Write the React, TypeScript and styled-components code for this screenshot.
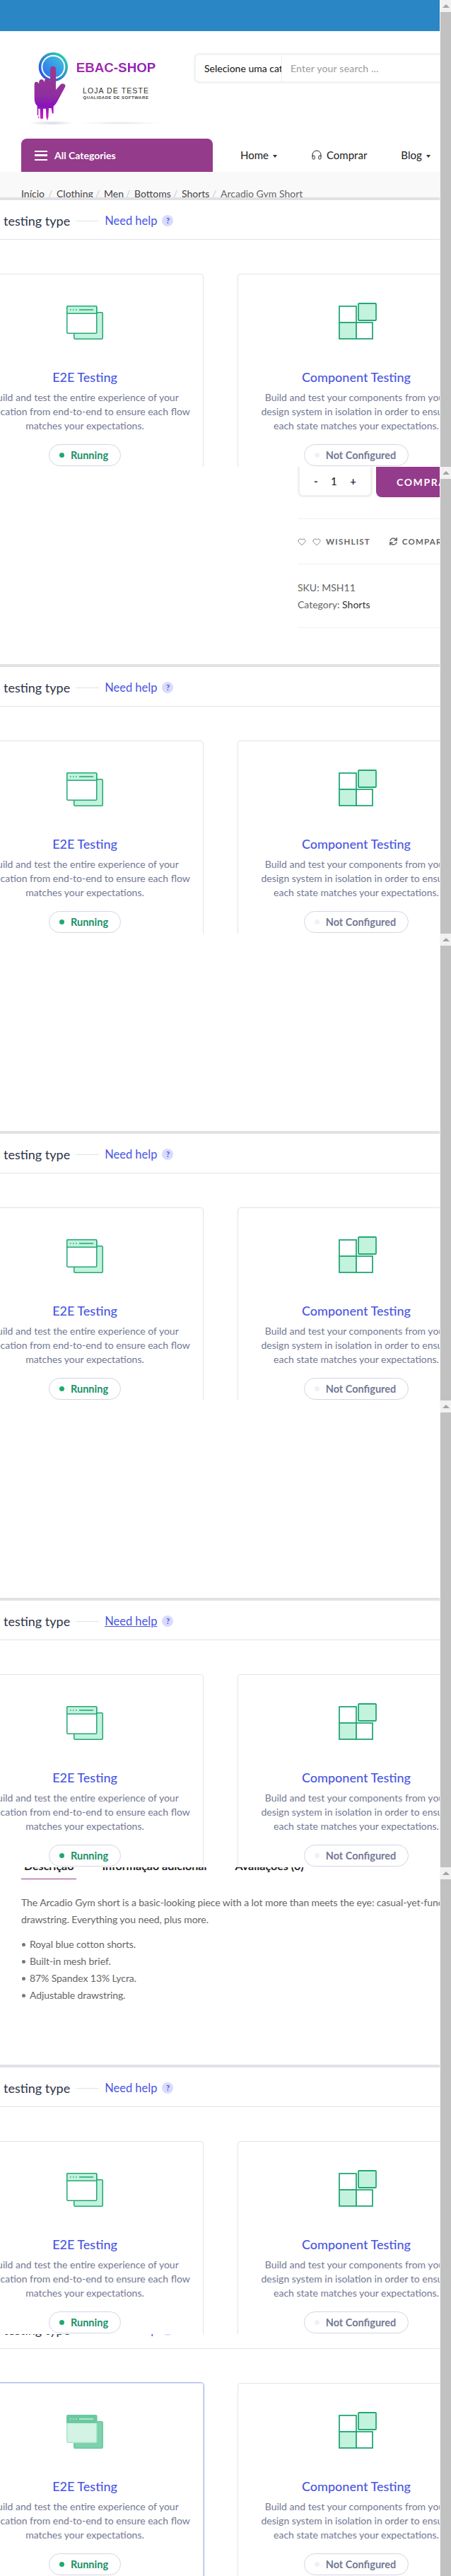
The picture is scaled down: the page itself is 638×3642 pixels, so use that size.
import React from "react";
import styled, { createGlobalStyle } from "styled-components";
import { Headphones, Heart } from "lucide-react";
import { FaShoppingCart, FaSync } from "react-icons/fa";

const purple = "#953b8b";
const panelFont = `"Lato", "Open Sans", sans-serif`;

const GlobalStyle = createGlobalStyle`
  html, body {
    margin: 0;
    padding: 0;
    background: #fff;
    font-family: "Lato", sans-serif;
    overflow: hidden;
  }
  * { box-sizing: border-box; }
`;

const Page = styled.div`
  display: flex;
  width: 638px;
  height: 3642px;
  overflow: hidden;
`;

const Content = styled.main`
  width: 622px;
  flex: none;
  overflow: hidden;
`;

/* scroll rail: the capture was stitched, so each screenful has its own up arrow */
const Rail = styled.aside`
  width: 16px;
  flex: none;
  display: flex;
  flex-direction: column;
  border-left: 1px solid #f7f7f7;
`;

const RailArrow = styled.div`
  height: 17px;
  flex: none;
  background: #f1f1f1;
  display: flex;
  align-items: center;
  justify-content: center;
  &::before {
    content: "";
    border-left: 5px solid transparent;
    border-right: 5px solid transparent;
    border-bottom: 5px solid #a3a3a3;
  }
`;

const RailThumb = styled.div<{ $h: number }>`
  height: ${(p) => p.$h}px;
  flex: none;
  background: #c1c1c1;
`;

const TopBar = styled.div`
  height: 44px;
  background: #2b86c5;
`;

const HeaderRow = styled.header`
  height: 152px;
  display: flex;
  align-items: flex-start;
`;

const Logo = styled.div`
  width: 274px;
  flex: none;
  padding: 29px 0 0 40px;
`;

const LogoTop = styled.div`
  display: flex;
  padding-left: 7px;
`;

const LogoText = styled.div`
  margin-left: 11px;
  width: 114px;
  padding-top: 10px;
  text-align: center;
  white-space: nowrap;
`;

const LogoName = styled.div`
  font: bold 18.8px/26px "Liberation Sans", sans-serif;
  background: linear-gradient(90deg, #a52cab, #8d24b5);
  -webkit-background-clip: text;
  background-clip: text;
  color: transparent;
`;

const LogoTag = styled.div`
  margin-top: 13px;
  font: 10.5px/12px "Liberation Sans", sans-serif;
  letter-spacing: 1.1px;
  color: #333;
`;

const LogoSub = styled.div`
  font: bold 6px/8px "Liberation Sans", sans-serif;
  letter-spacing: 0.55px;
  color: #444;
`;

const LogoShadow = styled.div`
  margin-top: 1px;
  height: 6px;
  width: 190px;
  background:
    radial-gradient(ellipse 33px 3px at 33px 3px, #d9d7e2, transparent),
    radial-gradient(ellipse 60px 2px at 130px 3px, #e4e2ec, transparent);
`;

const SearchBox = styled.div`
  margin-top: 31px;
  flex: 1;
  height: 43px;
  display: flex;
  align-items: center;
  border: 3px solid #f3f3f3;
  border-right: 0;
  border-radius: 8px 0 0 8px;
`;

const CategorySelect = styled.div`
  width: 122px;
  flex: none;
  padding: 0 7px 0 12px;
  height: 100%;
  line-height: 37px;
  font-size: 14px;
  color: #111;
  white-space: nowrap;
  overflow: hidden;
  border-right: 1px solid #f0f0f0;
`;

const SearchPlaceholder = styled.div`
  padding-left: 12px;
  font-size: 14px;
  color: #9a9a9a;
  letter-spacing: 0.2px;
`;

const NavRow = styled.nav`
  height: 47px;
  display: flex;
  padding-left: 30px;
`;

const CategoryBar = styled.div`
  width: 271px;
  flex: none;
  background: ${purple};
  border-radius: 8px 8px 0 0;
  display: flex;
  align-items: center;
  padding-left: 19px;
  gap: 10px;
  color: #fff;
  font-size: 14px;
  font-weight: 700;
`;

const Burger = styled.span`
  width: 18px;
  height: 14px;
  flex: none;
  border-top: 2.5px solid #fff;
  border-bottom: 2.5px solid #fff;
  position: relative;
  &::after {
    content: "";
    position: absolute;
    left: 0;
    right: 0;
    top: 3.5px;
    height: 2.5px;
    background: #fff;
  }
`;

const NavItems = styled.div`
  display: flex;
  align-items: center;
  padding: 0 0 1px 39px;
  gap: 48px;
  font-size: 15px;
  color: #222;
  white-space: nowrap;
`;

const NavItem = styled.span`
  display: flex;
  align-items: center;
  gap: 6px;
  color: #222;
`;

const Caret = styled.i`
  width: 0;
  height: 0;
  margin-top: 3px;
  border-left: 3.5px solid transparent;
  border-right: 3.5px solid transparent;
  border-top: 4px solid #333;
`;

const BreadcrumbBand = styled.div`
  height: 36px;
  background: #f9f9f9;
  overflow: hidden;
  padding: 22px 0 0 30px;
  display: flex;
  gap: 5px;
  font-size: 14px;
  line-height: 18px;
  color: #444;
  white-space: nowrap;
`;

const Crumb = styled.span<{ $current?: boolean; $w: number }>`
  width: ${(p) => p.$w}px;
  color: ${(p) => (p.$current ? "#666" : "#444")};
`;

const CrumbSep = styled.span`
  color: #ccc;
  width: 7px;
`;

const Panel = styled.section<{ $bare?: boolean }>`
  height: ${(p) => (p.$bare ? 342 : 381)}px;
  overflow: hidden;
  border-top: ${(p) => (p.$bare ? "0" : "4px solid #e1e1e6")};
  background: #fff;
  font-family: ${panelFont};
`;

const PanelInner = styled.div<{ $lift?: boolean }>`
  margin-top: ${(p) => (p.$lift ? -35 : 0)}px;
`;

const PanelHead = styled.div`
  height: 56px;
  border-bottom: 1px solid #e1e3ed;
  display: flex;
  align-items: center;
  padding: 3px 0 0 5px;
  white-space: nowrap;
`;

const PanelTitle = styled.span`
  font-size: 18px;
  color: #2e3247;
`;

const HeadRule = styled.span`
  width: 33px;
  height: 1px;
  margin: 0 8px;
  background: #e1e3ed;
`;

const HelpLink = styled.span<{ $underline?: boolean }>`
  font-size: 16.5px;
  color: #4956e3;
  text-decoration: ${(p) => (p.$underline ? "underline" : "none")};
`;

const HelpBadge = styled.span`
  width: 16px;
  height: 16px;
  margin-left: 7px;
  border-radius: 50%;
  background: #d9dbfb;
  color: #4956e3;
  font-size: 11px;
  font-weight: 700;
  line-height: 16px;
  text-align: center;
`;

const CardGrid = styled.div`
  margin: 48px 0 0 -48px;
  display: grid;
  grid-template-columns: 336px 336px;
  gap: 48px;
`;

const Card = styled.article<{ $active?: boolean }>`
  height: 320px;
  padding: 40px 24px 0;
  display: flex;
  flex-direction: column;
  align-items: center;
  text-align: center;
  border: 1px solid #e1e3ed;
  border-radius: 4px;
  box-shadow: ${(p) => (p.$active ? "0 0 0 1px #a9aff5" : "none")};
`;

const IconSlot = styled.div`
  height: 52px;
  display: flex;
  align-items: flex-end;
`;

const ComponentSvg = styled.svg`
  margin-left: 4px;
`;

const CardTitle = styled.h3`
  margin: 39px 0 0;
  font-size: 18px;
  font-weight: 500;
  line-height: 28px;
  color: #4956e3;
  white-space: nowrap;
`;

const CardText = styled.p`
  margin: 5px -10px 0;
  font-size: 14px;
  line-height: 20px;
  color: #747994;
  white-space: nowrap;
`;

const Status = styled.div<{ $on?: boolean }>`
  margin-top: 16px;
  height: 31px;
  padding: 0 17px 0 14px;
  display: flex;
  align-items: center;
  gap: 9px;
  border: 1px solid #d5d4e6;
  border-radius: 16px;
  font-size: 14.5px;
  font-weight: 700;
  color: ${(p) => (p.$on ? "#1a9067" : "#747994")};
  white-space: nowrap;
`;

const StatusDot = styled.i<{ $on?: boolean }>`
  width: 7px;
  height: 7px;
  border-radius: 50%;
  background: ${(p) => (p.$on ? "#1fa971" : "#eff0f8")};
`;

const Gap = styled.div`
  height: 279px;
  overflow: hidden;
`;

const Buy = styled.div`
  padding-left: 421px;
`;

const BuyRow = styled.div`
  height: 43px;
  display: flex;
  gap: 5px;
`;

const Qty = styled.div`
  width: 106px;
  flex: none;
  display: flex;
  align-items: center;
  justify-content: space-between;
  padding: 0 20px;
  border: 3px solid #f0f0f0;
  border-top: 0;
  border-radius: 0 0 8px 8px;
  font-size: 15px;
  font-weight: 700;
  color: #2e3247;
`;

const QtyValue = styled.span`
  font-weight: 400;
  color: #111;
`;

const BuyButton = styled.div`
  flex: 1;
  display: flex;
  align-items: center;
  gap: 9px;
  padding-left: 20px;
  background: ${purple};
  border-radius: 0 0 0 8px;
  color: #fff;
  font-size: 14px;
  font-weight: 700;
  letter-spacing: 1.6px;
  white-space: nowrap;
  overflow: hidden;
`;

const Rule = styled.hr<{ $top: number }>`
  margin: ${(p) => p.$top}px 0 0;
  border: 0;
  border-top: 1px solid #f0f0f0;
`;

const ActionRow = styled.div`
  height: 63px;
  display: flex;
  align-items: center;
  color: #666;
  font-size: 11.5px;
  font-weight: 700;
  letter-spacing: 1.2px;
  white-space: nowrap;
`;

const Action = styled.span`
  display: flex;
  align-items: center;
  gap: 7px;
  margin-right: 27px;
`;

const WishHeart = styled.span`
  display: flex;
  margin-right: 9px;
`;

const MetaList = styled.div`
  padding-top: 21px;
  font-size: 14px;
  line-height: 24px;
  color: #666;
`;

const MetaValue = styled.span`
  color: #333;
`;

const Tabs = styled.div`
  height: 17px;
  display: flex;
  align-items: flex-end;
  padding-left: 30px;
  gap: 32px;
  overflow: hidden;
`;

const Tab = styled.div<{ $active?: boolean }>`
  flex: none;
  padding: 0 4px 8px;
  font-size: 16px;
  line-height: 20px;
  font-weight: 700;
  color: #222;
  border-bottom: 1px solid ${(p) => (p.$active ? purple : "transparent")};
`;

const TabBody = styled.div`
  padding: 21px 0 0 30px;
  font-size: 14px;
  line-height: 24px;
  letter-spacing: -0.08px;
  color: #666;
  white-space: nowrap;
`;

const Paragraph = styled.p`
  margin: 0 0 11px;
`;

const Bullets = styled.ul`
  margin: 0;
  padding: 0;
  list-style: none;
`;

const Bullet = styled.li`
  display: flex;
  align-items: center;
  &::before {
    content: "";
    width: 5px;
    height: 5px;
    margin: 0 6px 0 1px;
    border-radius: 50%;
    background: #777;
  }
`;

const HandLogo = () => (
  <svg width="49" height="97" viewBox="50 70 147 291" style={{ flex: "none" }}>
    <defs>
      <linearGradient id="ring" x1="0" y1="1" x2="1" y2="0">
        <stop offset="0" stopColor="#2a3cf0" />
        <stop offset="1" stopColor="#2ee0a8" />
      </linearGradient>
      <linearGradient id="core" x1="0" y1="1" x2="1" y2="0">
        <stop offset="0" stopColor="#2f6df0" />
        <stop offset="1" stopColor="#3fc4dc" />
      </linearGradient>
      <linearGradient id="hand" x1="0" y1="0" x2="0" y2="1">
        <stop offset="0" stopColor="#9b3a8c" />
        <stop offset="0.55" stopColor="#8f2fa0" />
        <stop offset="0.75" stopColor="#8a12bb" />
        <stop offset="1" stopColor="#d321c4" />
      </linearGradient>
    </defs>
    <circle cx="135" cy="135" r="62" fill="url(#ring)" />
    <circle cx="135" cy="135" r="51" fill="#fff" />
    <circle cx="135" cy="135" r="45" fill="url(#core)" />
    <path
      fill="url(#hand)"
      d="M55 208 Q55 198 64 198 Q73 198 73 208 L75 198 Q76 188 85 188 Q95 188 95 198 L98 195 Q99 183 109 183 Q120 183 120 195 L122 195 L122 144 Q122 132 134 132 Q146 132 146 144 L146 232 L165 210 Q172 204 181 207 Q190 212 184 222 L150 285 Q140 300 136 300 L136 330 Q134 336 130 330 L127 310 L116 310 L114 350 Q110 358 105 350 L104 312 L92 312 L92 352 Q86 360 80 352 L79 312 L72 312 L72 338 Q70 345 67 338 L67 300 Q56 290 55 270 Z"
    />
    <circle cx="73" cy="348" r="3" fill="#e325c8" />
    <circle cx="110" cy="356" r="3" fill="#e325c8" />
  </svg>
);

const E2EIcon = ({ active }: { active?: boolean }) => {
  const stroke = active ? "#6bc9a0" : "#22a876";
  const frontStroke = active ? "#a8e6cb" : "#22a876";
  const back = active ? "#7dd1ac" : "#c3f2dd";
  const front = active ? "#d3f3e4" : "#fff";
  const bar = active ? "#6bc9a0" : "#c3f2dd";
  const marks = active ? "#c3f2dd" : "#22a876";
  return (
    <svg width="52" height="48" viewBox="0 0 52 48" fill="none">
      <rect x="10.75" y="9.75" width="40.5" height="37.5" rx="1.5" fill={back} stroke={stroke} strokeWidth="1.5" />
      <rect x="0.75" y="0.75" width="42" height="38.5" rx="1.5" fill={front} stroke={frontStroke} strokeWidth="1.5" />
      <path d="M0.75 2.25 a1.5 1.5 0 0 1 1.5-1.5 h39 a1.5 1.5 0 0 1 1.5 1.5 v9 h-42 z" fill={bar} stroke={stroke} strokeWidth="1.5" />
      <path d="M5 6h1.5M9 6h1.5M13 6h1.5M18 6h20" stroke={marks} strokeWidth="1.5" />
    </svg>
  );
};

const ComponentIcon = () => (
  <ComponentSvg width="54" height="52" viewBox="0 0 54 52" fill="none" stroke="#22a876" strokeWidth="1.8">
    <rect x="1" y="5" width="24" height="23" fill="#fff" />
    <rect x="1" y="28" width="24" height="23" fill="#c3f2dd" />
    <rect x="25" y="28" width="23" height="23" fill="#fff" />
    <rect x="28" y="1" width="25" height="24" rx="1" fill="#c3f2dd" />
  </ComponentSvg>
);

const TestingPanel = ({
  bare,
  underline,
  active,
}: {
  bare?: boolean;
  underline?: boolean;
  active?: boolean;
}) => (
  <Panel $bare={bare}>
    <PanelInner $lift={bare}>
      <PanelHead>
        <PanelTitle>testing type</PanelTitle>
        <HeadRule />
        <HelpLink $underline={underline}>Need help</HelpLink>
        <HelpBadge>?</HelpBadge>
      </PanelHead>
      <CardGrid>
        <Card $active={active}>
          <IconSlot>
            <E2EIcon active={active} />
          </IconSlot>
          <CardTitle>E2E Testing</CardTitle>
          <CardText>
            Build and test the entire experience of your
            <br />
            application from end-to-end to ensure each flow
            <br />
            matches your expectations.
          </CardText>
          <Status $on>
            <StatusDot $on />
            Running
          </Status>
        </Card>
        <Card>
          <IconSlot>
            <ComponentIcon />
          </IconSlot>
          <CardTitle>Component Testing</CardTitle>
          <CardText>
            Build and test your components from your
            <br />
            design system in isolation in order to ensure
            <br />
            each state matches your expectations.
          </CardText>
          <Status>
            <StatusDot />
            Not Configured
          </Status>
        </Card>
      </CardGrid>
    </PanelInner>
  </Panel>
);

const crumbs: [string, number][] = [
  ["Início", 33],
  ["Clothing", 50],
  ["Men", 26],
  ["Bottoms", 50],
  ["Shorts", 38],
];

const railHeights = [643, 643, 643, 643, 985];

export default function App() {
  return (
    <Page>
      <GlobalStyle />
      <Content>
        <TopBar />
        <HeaderRow>
          <Logo>
            <LogoTop>
              <HandLogo />
              <LogoText>
                <LogoName>EBAC-SHOP</LogoName>
                <LogoTag>LOJA DE TESTE</LogoTag>
                <LogoSub>QUALIDADE DE SOFTWARE</LogoSub>
              </LogoText>
            </LogoTop>
            <LogoShadow />
          </Logo>
          <SearchBox>
            <CategorySelect>Selecione uma cat</CategorySelect>
            <SearchPlaceholder>Enter your search ...</SearchPlaceholder>
          </SearchBox>
        </HeaderRow>
        <NavRow>
          <CategoryBar>
            <Burger />
            All Categories
          </CategoryBar>
          <NavItems>
            <NavItem>
              Home <Caret />
            </NavItem>
            <NavItem>
              <Headphones size={16} strokeWidth={1.5} />
              Comprar
            </NavItem>
            <NavItem>
              Blog <Caret />
            </NavItem>
          </NavItems>
        </NavRow>
        <BreadcrumbBand>
          {crumbs.map(([label, w]) => (
            <React.Fragment key={label}>
              <Crumb $w={w}>{label}</Crumb>
              <CrumbSep>/</CrumbSep>
            </React.Fragment>
          ))}
          <Crumb $current $w={112}>
            Arcadio Gym Short
          </Crumb>
        </BreadcrumbBand>

        <TestingPanel />
        <Gap>
          <Buy>
            <BuyRow>
              <Qty>
                <span>-</span>
                <QtyValue>1</QtyValue>
                <span>+</span>
              </Qty>
              <BuyButton>
                <FaShoppingCart size={16} />
                COMPRAR
              </BuyButton>
            </BuyRow>
            <Rule $top={30} />
            <ActionRow>
              <WishHeart>
                <Heart size={12} strokeWidth={1.5} />
              </WishHeart>
              <Action>
                <Heart size={12} strokeWidth={1.5} />
                WISHLIST
              </Action>
              <Action>
                <FaSync size={11} />
                COMPARE
              </Action>
            </ActionRow>
            <Rule $top={0} />
            <MetaList>
              <div>SKU: MSH11</div>
              <div>
                Category: <MetaValue>Shorts</MetaValue>
              </div>
            </MetaList>
            <Rule $top={20} />
          </Buy>
        </Gap>

        <TestingPanel />
        <Gap />

        <TestingPanel />
        <Gap />

        <TestingPanel underline />
        <Gap>
          <Tabs>
            <Tab $active>Descrição</Tab>
            <Tab>Informação adicional</Tab>
            <Tab>Avaliações (0)</Tab>
          </Tabs>
          <TabBody>
            <Paragraph>
              The Arcadio Gym short is a basic-looking piece with a lot more than meets the eye: casual-yet-functional
              <br />
              drawstring. Everything you need, plus more.
            </Paragraph>
            <Bullets>
              <Bullet>Royal blue cotton shorts.</Bullet>
              <Bullet>Built-in mesh brief.</Bullet>
              <Bullet>87% Spandex 13% Lycra.</Bullet>
              <Bullet>Adjustable drawstring.</Bullet>
            </Bullets>
          </TabBody>
        </Gap>

        <TestingPanel />
        <TestingPanel bare active />
      </Content>
      <Rail>
        {railHeights.map((h, i) => (
          <React.Fragment key={i}>
            <RailArrow />
            <RailThumb $h={h} />
          </React.Fragment>
        ))}
      </Rail>
    </Page>
  );
}
